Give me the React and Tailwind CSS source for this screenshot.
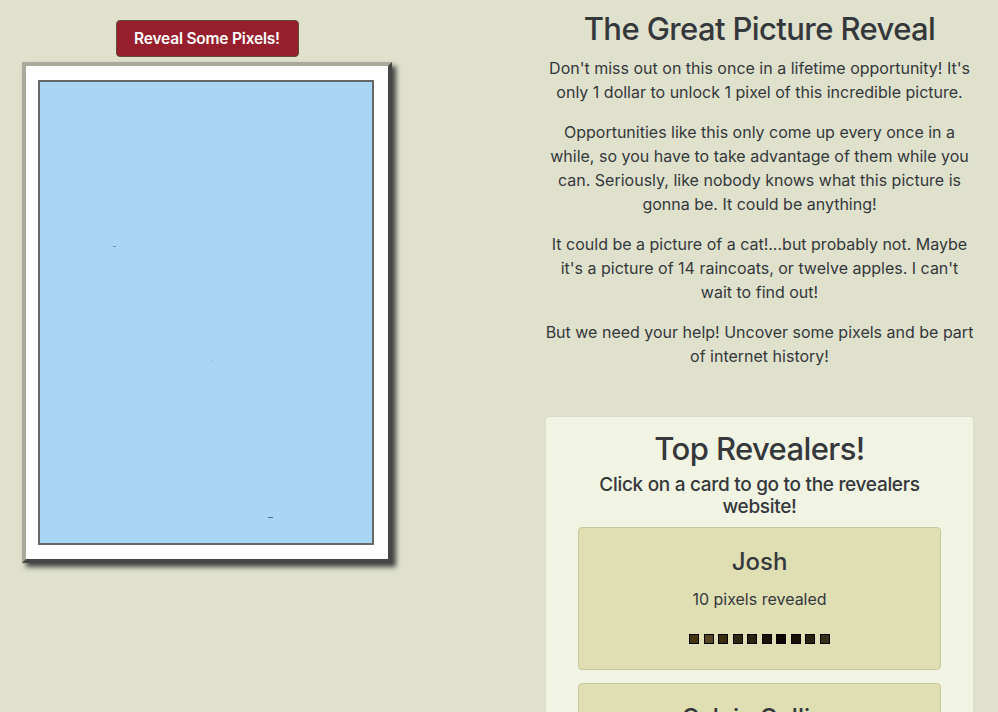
export default function App() {
  const squares = ["#47360a", "#574524", "#3a2c0c", "#2e2710", "#2a2410", "#1b1206", "#0e0602", "#181006", "#29200f", "#34301a"];
  return (
    <div className="min-h-screen w-full bg-[#dfe1cd] text-[#34383b] flex" style={{ fontFamily: "Inter, 'Noto Sans', sans-serif" }}>
      <div className="w-[414px] shrink-0 flex flex-col items-center pt-5">
        <button className="h-[37px] w-[183px] rounded-[4px] border border-[#5b4f30] bg-[#971e2c] text-white text-[15.5px] font-semibold leading-[23px] tracking-[-0.2px]">
          Reveal Some Pixels!
        </button>
        <div className="mt-[5px] w-[370px] border-4 border-t-[#a9aa9c] border-l-[#a9aa9c] border-r-[#464646] border-b-[#464646] bg-white pl-3 pr-[14px] pt-[14px] pb-[14px] shadow-[4px_4px_5px_#444]">
          <div className="relative h-[465px] w-[336px] border-2 border-[#686868] bg-[#a9d6f5]">
            <span className="absolute left-[73px] top-[164px] h-px w-[3px] bg-[#6f8ea8]" />
            <span className="absolute left-[172px] top-[278px] h-px w-px bg-[#8fb2cc]" />
            <span className="absolute left-[228px] top-[435px] h-px w-[5px] bg-[#4f6f88]" />
          </div>
        </div>
      </div>
      <div className="ml-[131px] w-[429px] shrink-0 pt-[10px] text-center">
        <h1 className="text-[31px] leading-[38px] font-medium tracking-[-0.6px] mb-2">The Great Picture Reveal</h1>
        <p className="text-[16px] leading-6 mb-4 whitespace-nowrap">Don't miss out on this once in a lifetime opportunity! It's<br />only 1 dollar to unlock 1 pixel of this incredible picture.</p>
        <p className="text-[16px] leading-6 mb-4 whitespace-nowrap">Opportunities like this only come up every once in a<br />while, so you have to take advantage of them while you<br />can. Seriously, like nobody knows what this picture is<br />gonna be. It could be anything!</p>
        <p className="text-[16px] leading-6 mb-4 whitespace-nowrap">It could be a picture of a cat!...but probably not. Maybe<br />it's a picture of 14 raincoats, or twelve apples. I can't<br />wait to find out!</p>
        <p className="text-[16px] leading-6 whitespace-nowrap">But we need your help! Uncover some pixels and be part<br />of internet history!</p>
        <div className="mt-12 border border-[#dcdcc8] rounded-[4px] bg-[#f2f4e3] px-8 pt-[13px] pb-8">
          <h2 className="text-[31px] leading-[38px] font-medium tracking-[-0.6px]">Top Revealers!</h2>
          <h3 className="mt-[6px] text-[19px] leading-[22px] font-medium tracking-[-0.3px]">Click on a card to go to the revealers<br />website!</h3>
          <div className="mt-[9px] border border-[#c9c79c] rounded-[4px] bg-[#e0deb3] pt-[19px] pb-[25px]">
            <h4 className="text-[24px] leading-[29px] font-medium">Josh</h4>
            <p className="mt-[11px] text-[16px] leading-6">10 pixels revealed</p>
            <div className="mt-[23px] flex justify-center gap-[4.5px]">
              {squares.map((c, i) => (
                <span key={i} className="block h-[10px] w-[10px] border border-black" style={{ backgroundColor: c }} />
              ))}
            </div>
          </div>
          <div className="mt-[13px] border border-[#c9c79c] rounded-[4px] bg-[#e0deb3] pt-[19px] pb-[25px]">
            <h4 className="text-[24px] leading-[29px] font-medium">Calvin Collins</h4>
            <p className="mt-[11px] text-[16px] leading-6">8 pixels revealed</p>
          </div>
        </div>
      </div>
    </div>
  );
}
